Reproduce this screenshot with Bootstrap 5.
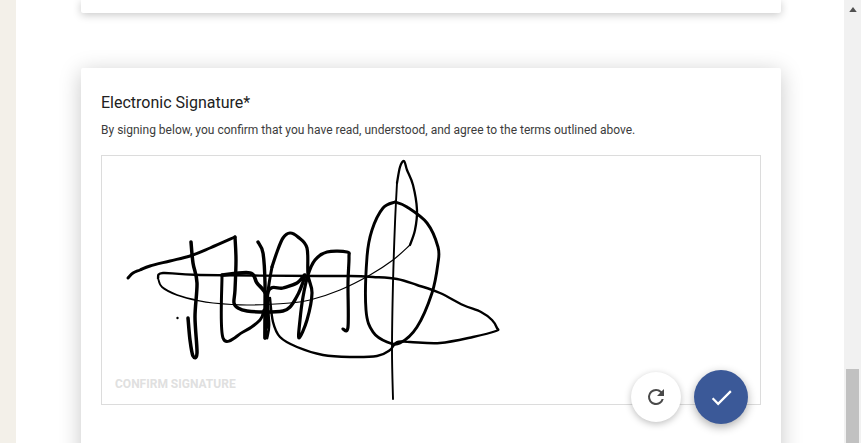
<!DOCTYPE html>
<html lang="en">
<head>
<meta charset="utf-8">
<title>Electronic Signature</title>
<link href="https://cdn.jsdelivr.net/npm/bootstrap@5.3.0/dist/css/bootstrap.min.css" rel="stylesheet">
<style>
html,body{height:443px;overflow:hidden;margin:0}
body{background:#f3f0e9;font-family:Roboto,"Liberation Sans",sans-serif;color:#212121}
.page-frame{height:443px;margin-left:16px}
.sheet{background:#fff;overflow:hidden;padding:0 63px 0 65px}
.stub-card{height:13px;background:#fff;border-radius:0 0 2px 2px;box-shadow:0 2px 8px rgba(0,0,0,.22)}
.sig-card{margin-top:55px;height:420px;padding:25px 20px 0;background:#fff;border-radius:2px;box-shadow:0 4px 22px rgba(0,0,0,.22)}
.sig-title{font-size:16px;line-height:20px;font-weight:400;margin:0 0 9px;color:#212121}
.sig-note{font-size:12px;line-height:16px;margin:0 0 17px;color:#3c3c3c}
.sig-box{position:relative;height:250px;border:1px solid #dcdcdc}
.sig-art{position:absolute;left:-102px;top:-156px;width:861px;height:443px;pointer-events:none}
.sig-art path{fill:none;stroke:#000;stroke-linecap:round;stroke-linejoin:round}
.sig-hint{position:absolute;left:13px;bottom:13px;font-size:12px;line-height:14px;font-weight:700;color:#e0e0e0}
.fab{position:absolute;display:flex;align-items:center;justify-content:center;border:0;padding:0;border-radius:50%}
.fab-reset{left:529px;top:216px;width:50px;height:50px;background:#fff;box-shadow:0 2px 7px rgba(0,0,0,.25)}
.fab-ok{left:592px;top:214px;width:54px;height:54px;background:#3b5998;box-shadow:0 3px 10px rgba(0,0,0,.32)}
.scroll-rail{width:17px;background:#f1f1f1}
.scroll-arrow{display:block;margin:7px auto 0;width:8px;height:5px}
.scroll-thumb{width:13px;height:74px;margin:357px auto 0;background:#c1c1c1}
</style>
</head>
<body>
<div class="page-frame d-flex">
  <main class="sheet flex-grow-1">
    <div class="stub-card"></div>
    <section class="sig-card">
      <h2 class="sig-title">Electronic Signature*</h2>
      <p class="sig-note">By signing below, you confirm that you have read, understood, and agree to the terms outlined above.</p>
      <div class="sig-box">
        <div class="sig-hint">CONFIRM SIGNATURE</div>
        <svg class="sig-art" viewBox="0 0 861 443" aria-hidden="true">
          <g id="sig"></g>
          <circle cx="177.5" cy="318" r="1.2"/>
        </svg>
        <button type="button" class="fab fab-reset" aria-label="Reset">
          <svg width="24" height="24" viewBox="0 0 24 24"><path fill="#4a4a4a" d="M17.65 6.35A7.96 7.96 0 0 0 12 4a8 8 0 1 0 7.73 10h-2.08A6 6 0 1 1 12 6c1.66 0 3.14.69 4.22 1.78L13 11h7V4l-2.35 2.35z"/></svg>
        </button>
        <button type="button" class="fab fab-ok" aria-label="Confirm">
          <svg width="27" height="27" viewBox="0 0 24 24"><path fill="#fff" d="M9 16.2 4.8 12l-1.4 1.4L9 19 21 7l-1.4-1.4z"/></svg>
        </button>
      </div>
    </section>
  </main>
  <div class="scroll-rail flex-shrink-0">
    <svg class="scroll-arrow" viewBox="0 0 9 6"><path fill="#505050" d="M4.5 0 9 6H0z"/></svg>
    <div class="scroll-thumb"></div>
  </div>
</div>
<script>
var strokes=[
[2.9,[128,278,133,273,140,270,150,266,170,261,190,256,210,248,235,237]],
[3.4,[235,237,236,260,235,290,234,303,238,308,247,311,265,312,283,311,290,307,296,298,300,290,305,275,297,283,283,288,268,292,265,338,265,283,263,253,258,242]],
[3,[272,267,268,292,265,338]],
[2.8,[267,300,269,325,267,338]],
[3.2,[272,267,277,252,283,238,290,233,298,237,307,248,308,275,312,293,307,320,299,338,300,320,303,297,308,275,315,260,327,252,347,252,349,257,348,283,348,327,343,329]],
[3.5,[191,242,193,263,197,283,195,317,197,353,193,356,190,340,188,318]],
[3,[222,275,223,338,243,332,260,320,264,310]],
[3.7,[222,275,250,273,257,283,267,297,267,327]],
[2.4,[158,278,163,273,200,275,320,276,350,276,373,277,397,279,417,285,440,293,463,305,481,312,492,320,497,328,496,331,473,337,440,343,410,342,397,342,390,350,377,356,350,357,323,355,297,347,280,337,273,322,270,298]],
[1.8,[158,278,162,287,177,295,195,300]],
[1.2,[195,300,213,303,247,305,290,303,310,300,340,290,370,275,393,260,410,245]],
[2.3,[410,245,415,230,417,210,413,185,407,170,404,161,400,167,397,183]],
[1.9,[397,183,395,223,393,283,392,350,393,399]],
[2.9,[395,202,383,208,372,230,367,257,366,310,373,332,387,342,400,343,417,327,432,293,438,263,438,247,427,223,407,207,395,202]]
];
var g=document.getElementById('sig');
strokes.forEach(function(s){
  var a=s[1],p=[];for(var i=0;i<a.length;i+=2)p.push([a[i],a[i+1]]);
  var d='M'+p[0];
  for(var j=0;j<p.length-1;j++){
    var p0=p[j-1]||p[j],p1=p[j],p2=p[j+1],p3=p[j+2]||p2;
    var t=.167;
    d+='C'+(p1[0]+(p2[0]-p0[0])*t)+','+(p1[1]+(p2[1]-p0[1])*t)+' '+(p2[0]-(p3[0]-p1[0])*t)+','+(p2[1]-(p3[1]-p1[1])*t)+' '+p2;
  }
  var e=document.createElementNS('http://www.w3.org/2000/svg','path');
  e.setAttribute('d',d);e.setAttribute('stroke-width',s[0]);g.appendChild(e);
});
</script>
<script src="https://cdn.jsdelivr.net/npm/bootstrap@5.3.0/dist/js/bootstrap.bundle.min.js"></script>
</body>
</html>
